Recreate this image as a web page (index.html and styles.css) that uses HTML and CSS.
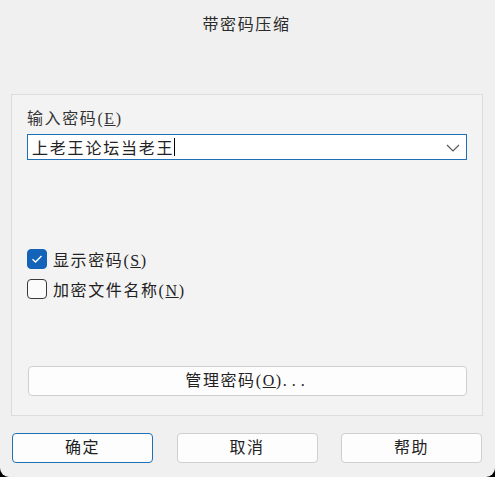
FILE: index.html
```html
<!DOCTYPE html>
<html lang="zh-CN">
<head>
<meta charset="utf-8">
<title>带密码压缩</title>
<link rel="stylesheet" href="styles.css">
</head>
<body>
<div class="window">
  <div class="title">带密码压缩</div>
  <div class="group">
    <div class="label">输入密码(<u>E</u>)</div>
    <div class="combo">
      <span class="value">上老王论坛当老王</span><span class="caret"></span>
      <svg class="chev" width="14" height="8" viewBox="0 0 14 8"><path d="M1 1 L7 7 L13 1" fill="none" stroke="#5a5a5a" stroke-width="1.2"/></svg>
    </div>
    <div class="checks">
      <div class="check-row">
        <span class="box checked"><svg width="12" height="10" viewBox="0 0 12 10"><path d="M1.5 5.2 L4.5 8 L10.5 2" fill="none" stroke="#fff" stroke-width="1.4"/></svg></span>
        <span>显示密码(<u>S</u>)</span>
      </div>
      <div class="check-row">
        <span class="box"></span>
        <span>加密文件名称(<u>N</u>)</span>
      </div>
    </div>
    <div class="manage">管理密码(<u>O</u>)<span class="dots">...</span></div>
  </div>
  <div class="buttons">
    <div class="btn primary">确定</div>
    <div class="btn">取消</div>
    <div class="btn">帮助</div>
  </div>
</div>
</body>
</html>
```
FILE: styles.css
```css
html, body {
  margin: 0;
  padding: 0;
  background: #000;
}
.window {
  width: 495px;
  height: 477px;
  background: #f0f0f0;
  border-radius: 0 0 9px 9px;
  font-family: "Liberation Serif", "Noto Sans CJK SC", serif;
  font-size: 16px;
  letter-spacing: 1.6px;
  color: #1c1c1c;
  display: flex;
  flex-direction: column;
  box-sizing: border-box;
}
.title {
  height: 50px;
  line-height: 50px;
  text-align: center;
  color: #2a2a2a;
  margin-right: 2px;
}
.group {
  margin: 44px 12px 0 11px;
  height: 322px;
  border: 1px solid #dcdcdc;
  background: #f3f3f3;
  box-sizing: border-box;
  display: flex;
  flex-direction: column;
  padding: 0 15px 0 15px;
}
.label {
  margin-top: 12px;
  height: 24px;
  line-height: 24px;
  color: #333;
}
.combo {
  margin-top: 3px;
  height: 26px;
  border: 1px solid #1f6fb8;
  background: #fff;
  box-sizing: border-box;
  display: flex;
  align-items: center;
  padding-left: 4px;
  position: relative;
}
.value {
  color: #222;
  letter-spacing: 1.8px;
}
.caret {
  display: inline-block;
  width: 1px;
  height: 18px;
  background: #000;
  margin-left: 0;
}
.chev {
  position: absolute;
  right: 6px;
  top: 9px;
}
.checks {
  margin-top: 89px;
  display: flex;
  flex-direction: column;
  gap: 10px;
}
.check-row {
  display: flex;
  align-items: center;
  gap: 6px;
  height: 20px;
  color: #222;
}
.box {
  width: 20px;
  height: 20px;
  box-sizing: border-box;
  border: 1px solid #3a3a3a;
  border-radius: 4px;
  background: #fbfbfb;
  display: flex;
  align-items: center;
  justify-content: center;
}
.box.checked {
  background: #1364b8;
  border-color: #1364b8;
}
.manage {
  margin-top: 67px;
  margin-left: 1px;
  height: 30px;
  border: 1px solid #cfcfcf;
  border-radius: 4px;
  background: #fdfdfd;
  box-sizing: border-box;
  text-align: center;
  line-height: 28px;
  color: #222;
}
.dots {
  letter-spacing: 5px;
}
.buttons {
  margin-top: 17px;
  padding: 0 13px 0 12px;
  display: flex;
  justify-content: space-between;
}
.btn {
  width: 141px;
  height: 30px;
  box-sizing: border-box;
  border: 1px solid #cfcfcf;
  border-radius: 4px;
  background: #fdfdfd;
  text-align: center;
  line-height: 28px;
  color: #222;
}
.btn.primary {
  border-color: #2070b8;
}
```
